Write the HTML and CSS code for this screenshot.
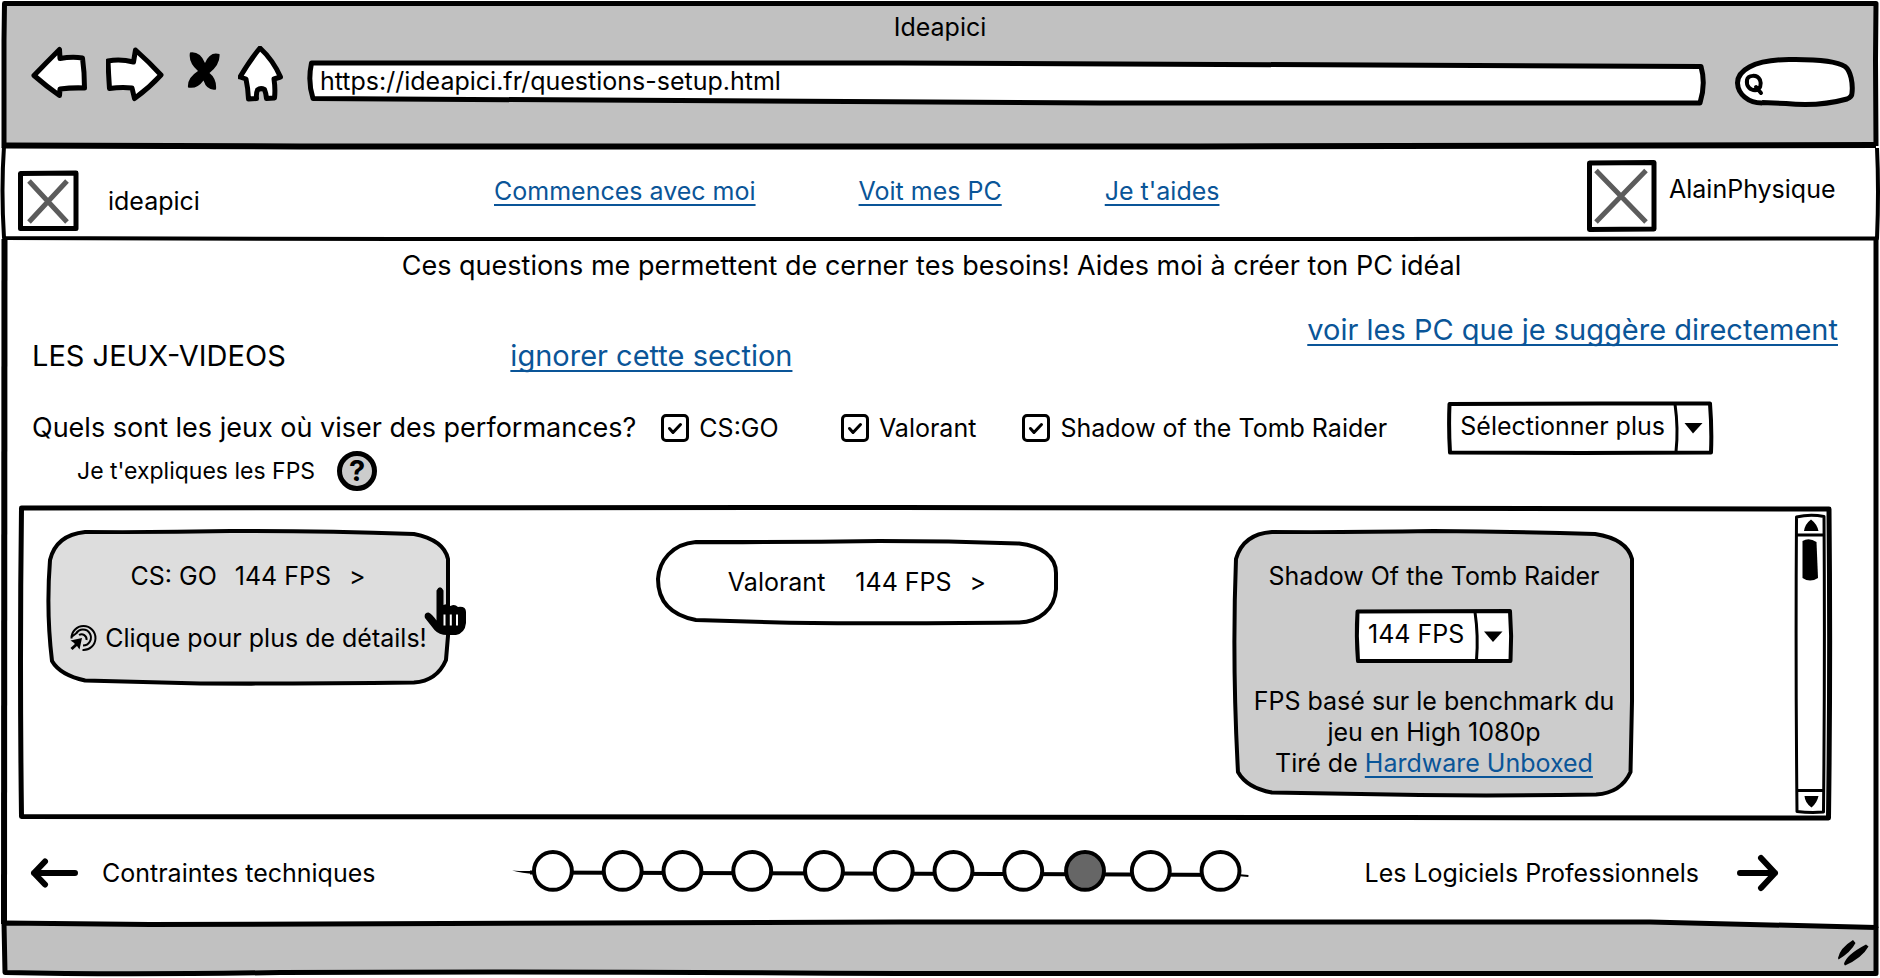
FILE: index.html
```html
<!DOCTYPE html>
<html lang="fr">
<head>
<meta charset="utf-8">
<meta name="viewport" content="width=device-width, initial-scale=1">
<title>Ideapici</title>
<link rel="stylesheet" href="styles.css">
</head>
<body>
<div class="window">

  <header class="chrome">
    <svg class="ink" viewBox="0 0 1880 146" preserveAspectRatio="none" aria-hidden="true">
      <path class="fill-chrome" d="M4 3.5H1876V146H4Z"/>
      <path class="line-5" d="M4 148V40L4.500 3.500H1876L1875.500 60L1876 146"/>
      <path class="line-6" d="M4 145.500L300 146.500H1200L1876 145"/>
    </svg>
    <h1 class="chrome-title">Ideapici</h1>
    <div class="toolbar">
      <button class="tool" type="button" aria-label="Précédent">
        <svg width="58" height="62" viewBox="30 46 58 62"><path class="shape" d="M34 75.500Q46 63 59.500 49.500L60 58.500Q72 56.500 82.500 58Q84.500 72 84.500 88Q72 87.500 60 89L59.500 95.500Q46 86 34 75.500Z"/></svg>
      </button>
      <button class="tool" type="button" aria-label="Suivant">
        <svg width="58" height="62" viewBox="106 46 58 62"><path class="shape" d="M108 61Q120 58.500 133.500 62L135.500 50Q149 62 161 75Q149 88 134.500 98.500L132 88Q121 87 109.500 88.500Q108.500 74 108 61Z"/></svg>
      </button>
      <button class="tool" type="button" aria-label="Arrêter">
        <svg width="38" height="62" viewBox="182 46 38 62"><path d="M190 52.500Q200 51 205 63Q210 51 219.500 54Q220.500 64 209.500 73Q217 79 216 89.500Q207 91 203.500 80.500Q197 89.500 188 87.500Q187 78 198 71Q188 62 190 52.500Z"/></svg>
      </button>
      <button class="tool" type="button" aria-label="Accueil">
        <svg width="46" height="62" viewBox="238 46 46 62"><path class="shape" d="M260 48Q273 60 280.500 77L274 79Q275.500 89 274.500 98L266.500 98.500Q266 93 264.500 89.500Q260.500 87.500 257.500 90Q256 93 256.500 98.500L248.500 99Q248 88 246 79L240 77Q250 60 260 48Z"/></svg>
      </button>
      <form class="address">
        <svg class="ink" viewBox="302 58 1414 48" preserveAspectRatio="none" aria-hidden="true">
          <path class="shape" d="M311.500 63H900L1701 66.500Q1706 84 1700 103H1100Q700 101 313 98.500Q307.500 82 311.500 63Z"/>
        </svg>
        <input class="address-input" type="text" aria-label="Adresse" value="https://ideapici.fr/questions-setup.html">
      </form>
      <label class="search">
        <svg class="ink" viewBox="1734 46 122 62" aria-hidden="true">
          <path class="shape" d="M1762 103C1748 103 1738 94 1737.500 83C1737.500 71 1752 60 1789 59.500C1824 59 1838 62 1845 66.500C1851 71 1853 84 1852 93Q1852 97 1847 99Q1818 107 1786 103.500L1762 102.500"/>
          <path class="loupe" d="M1757 90C1750 91 1746 86 1747 80C1748 75 1757 74 1760 80C1762 85 1760 89 1756 90M1756 87L1761 93"/>
        </svg>
        <input class="search-input" type="search" aria-label="Recherche">
      </label>
    </div>
  </header>

  <nav class="site-nav">
    <svg class="ink" viewBox="0 146 1880 93" preserveAspectRatio="none" aria-hidden="true">
      <path class="line-4" d="M4 146Q1 190 4 238L400 239H1400L1877 238.500Q1879 190 1877 148"/>
    </svg>
    <div class="brand">
      <svg class="placeholder" width="62" height="62" viewBox="0 0 62 62" role="img" aria-label="Logo"><path class="shape" d="M3.500 3.500L59 3V58.500H3.500Z"/><path class="cross" d="M12 11L50 52M50 11L12 52"/></svg>
      <span>ideapici</span>
    </div>
    <div class="links">
      <a href="#">Commences avec moi</a>
      <a href="#">Voit mes PC</a>
      <a href="#">Je t'aides</a>
    </div>
    <div class="user">
      <svg class="placeholder" width="71" height="72" viewBox="0 0 71 72" role="img" aria-label="Avatar"><path class="shape" d="M3.500 3L68 2.500V69L3.500 69.500Z"/><path class="cross" d="M10 10.500L60 62M60 10.500L10 62"/></svg>
      <span>AlainPhysique</span>
    </div>
  </nav>

  <main class="page">
    <svg class="ink" viewBox="0 239 1880 685" preserveAspectRatio="none" aria-hidden="true">
      <path class="line-6" d="M4.500 239Q3 560 4 924"/>
      <path class="line-5" d="M1876 239V928"/>
    </svg>
    <p class="intro">Ces questions me permettent de cerner tes besoins! Aides moi à créer ton PC idéal</p>

    <div class="section-head">
      <h2 class="section-title">LES JEUX-VIDEOS</h2>
      <a class="skip" href="#">ignorer cette section</a>
      <a class="suggest" href="#">voir les PC que je suggère directement</a>
    </div>

    <div class="question-row">
      <div class="question">
        <p class="question-text">Quels sont les jeux où viser des performances?</p>
        <div class="help">
          <span>Je t'expliques les FPS</span>
          <button class="help-button" type="button" aria-label="Aide sur les FPS">?</button>
        </div>
      </div>
      <label class="game"><span class="tick"><input type="checkbox" checked><svg width="28" height="28" viewBox="0 0 28 28" aria-hidden="true"><path d="M8.500 14.500L12 18.500L19.500 10.500"/></svg></span>CS:GO</label>
      <label class="game"><span class="tick"><input type="checkbox" checked><svg width="28" height="28" viewBox="0 0 28 28" aria-hidden="true"><path d="M8.500 14.500L12 18.500L19.500 10.500"/></svg></span>Valorant</label>
      <label class="game"><span class="tick"><input type="checkbox" checked><svg width="28" height="28" viewBox="0 0 28 28" aria-hidden="true"><path d="M8.500 14.500L12 18.500L19.500 10.500"/></svg></span>Shadow of the Tomb Raider</label>
      <div class="picker picker-wide">
        <svg class="ink" viewBox="1445 400 268 54" preserveAspectRatio="none" aria-hidden="true">
          <path class="shape-4" d="M1448.500 403L1600 402.500L1709 402.500Q1711 428 1710 451.500L1580 452L1449 451.500Q1447.500 428 1448.500 403Z"/>
          <path class="line-3" d="M1674 403Q1677.500 428 1675 451"/>
          <path d="M1683.500 422H1701.500L1692 432.500Z"/>
        </svg>
        <select aria-label="Autres jeux"><option>Sélectionner plus</option></select>
      </div>
    </div>

    <section class="panel" aria-label="Performances visées">
      <svg class="ink" viewBox="17 504 1815 316" preserveAspectRatio="none" aria-hidden="true">
        <path class="line-5" d="M21.500 507L900 506.500L1829 508Q1830.500 660 1828.500 817L1400 816.500L21.500 815.500Q19.500 660 21.500 507Z"/>
      </svg>
      <div class="cards">
        <button class="card" type="button">
          <svg class="ink" viewBox="46 529 403 155" preserveAspectRatio="none" aria-hidden="true">
            <path class="shape-4 fill-light" d="M50 559Q56 534 85 531Q160 531.500 230 530Q320 529.500 413 533Q443 539 447 558V635L445 659Q436 680 413 681.500Q300 683 200 682.500L85 679.500Q60 674 52 660Q46 610 50 559Z"/>
          </svg>
          <span class="card-line"><span>CS: GO</span><span>144 FPS</span><span>&gt;</span></span>
          <span class="card-hint">
            <svg width="28" height="28" viewBox="71 624 28 28" aria-hidden="true">
              <path class="line-2" d="M73.500 638.500A12 12 0 1 1 84.500 650M78 633.500A8 8 0 1 1 85 645.500M81 635A5 5 0 0 1 88.500 640M74 636.500L80 632"/>
              <path class="line-3" d="M73.500 649L79 644"/>
              <path d="M72.500 640.500L84 638L81.500 649.500L79 646L75.500 642.500Z"/>
            </svg>
            Clique pour plus de détails!
          </span>
          <svg class="hand" width="42" height="50" viewBox="423 585 42 50" aria-hidden="true">
            <path d="M435.500 589.500Q439 583 442.500 589.500V604Q446 602 449.500 605Q453.500 602.500 457 606Q465 605 465 611V622Q464 632 455 634H446Q438 634 433.500 629L424 617Q422.500 612 427.500 611.500Q431 613 435.500 619.500Z"/>
            <path class="slits" d="M443.500 613.500V624.500M449.800 613.500V624.500M456 613.500V624.500"/>
          </svg>
        </button>

        <button class="card card-slim" type="button">
          <svg class="ink" viewBox="655 539 405 85" preserveAspectRatio="none" aria-hidden="true">
            <path class="shape-4" d="M658 578C659 560 672 543 696 541Q790 541.500 880 540Q950 540 1020 542.500C1042 545 1057 555 1057 572V588C1056 608 1040 621 1020 621.500Q860 623 780 621.500L696 619C670 614 658 600 658 578Z"/>
          </svg>
          <span class="card-line card-line-loose"><span>Valorant</span><span class="value"><span>144 FPS</span><span>&gt;</span></span></span>
        </button>

        <article class="card">
          <svg class="ink" viewBox="1232 529 405 267" preserveAspectRatio="none" aria-hidden="true">
            <path class="shape-4 fill-mid" d="M1236 558Q1243 533 1272 531Q1350 531.500 1434 530Q1520 530.500 1596 533Q1628 538 1633 558V700L1631.500 771Q1622 792 1597 793.500Q1500 795 1420 794L1272 791.500Q1247 787 1238 771Q1232 660 1236 558Z"/>
          </svg>
          <h3 class="card-line">Shadow Of the Tomb Raider</h3>
          <div class="picker picker-narrow">
            <svg class="ink" viewBox="1357 608 160 54" preserveAspectRatio="none" aria-hidden="true">
              <path class="shape-4" d="M1360.500 610.500L1513 610Q1515 635 1513.500 660H1361Q1359 635 1360.500 610.500Z"/>
              <path class="line-3" d="M1478 611Q1481.500 635 1479.500 659"/>
              <path d="M1487 630.500H1505.500L1496 641Z"/>
            </svg>
            <select aria-label="FPS visés"><option>144 FPS</option></select>
          </div>
          <p class="source">FPS basé sur le benchmark du<br>jeu en High 1080p<br>Tiré de <a href="#">Hardware Unboxed</a></p>
        </article>
      </div>
      <svg class="scrollbar" viewBox="1793 512 34 302" preserveAspectRatio="none" aria-hidden="true">
        <path class="line-3" d="M1796.500 516Q1810 513 1824 515.500Q1825 660 1823.500 811Q1810 812 1797 810.500Q1795.500 660 1796.500 516ZM1797 534H1824M1797 789.500H1824"/>
        <path d="M1811 518.500Q1817 523 1818.500 530H1804Q1805 523 1811 518.500ZM1804.500 795H1818.500Q1817 802 1811.500 806.500Q1805 802 1804.500 795Z"/>
        <path d="M1802.500 540Q1809 536 1816.500 541L1818 577Q1810 582 1802.500 577Z"/>
      </svg>
    </section>

    <div class="steps">
      <a class="step-link" href="#">
        <svg width="48" height="36" viewBox="30 854 48 36" aria-hidden="true"><path class="arrow" d="M75 872H34M45 860.500L34 872L45 883.500"/></svg>
        Contraintes techniques
      </a>
      <svg class="progress" viewBox="512 847 739 48" role="img" aria-label="Étape 9 sur 11">
        <path d="M512 868.500Q522 869.500 535 869V872Q522 871.500 512 868.500Z"/>
        <path class="line-4" d="M530 870.500L1000 872L1240 873"/>
        <path class="line-2" d="M1240 873L1251 874"/>
        <g class="dots">
          <circle cx="553" cy="869" r="19"/><circle cx="623" cy="869" r="19"/><circle cx="683" cy="869" r="19"/><circle cx="753" cy="869" r="19"/><circle cx="825" cy="869" r="19"/><circle cx="895" cy="869" r="19"/><circle cx="955" cy="869" r="19"/><circle cx="1025" cy="869" r="19"/><circle class="current" cx="1087" cy="869" r="19"/><circle cx="1153" cy="869" r="19"/><circle cx="1223" cy="869" r="19"/>
        </g>
      </svg>
      <a class="step-link step-next" href="#">
        Les Logiciels Professionnels
        <svg width="42" height="38" viewBox="1737 853 42 38" aria-hidden="true"><path class="arrow" d="M1740 872H1775M1761 857L1775 872L1761 887"/></svg>
      </a>
    </div>
  </main>

  <footer class="status">
    <svg class="ink" viewBox="0 924 1880 54" preserveAspectRatio="none" aria-hidden="true">
      <path class="fill-chrome" d="M4 923L1600 922L1876 927V973H4Z"/>
      <path class="line-5" d="M4 923L150 924.500L900 922H1650L1876 927.500V973.500H900Q550 971 280 972.500Q120 975 5 972.500L4 923"/>
    </svg>
    <svg class="grip" width="32" height="28" viewBox="1837 939 32 28" aria-hidden="true">
      <path d="M1838 958Q1840 948 1853 940L1855.500 943Q1851 952 1838.500 959.500ZM1844 964Q1846 955 1866 944.500L1868.500 946.500Q1862 958 1845 965.500Z"/>
    </svg>
  </footer>
</div>
</body>
</html>
```
FILE: styles.css
```css
:root {
  --ink: #000;
  --chrome: #c1c1c1;
  --link: #0a5598;
  --text: 25px;
  --text-question: 27px;
  --text-large: 29px;
  --text-small: 23px;
}

* { box-sizing: border-box; }

body {
  margin: 0;
  background: #fff;
  color: var(--ink);
  font: 400 var(--text)/30px Inter, "Liberation Sans", sans-serif;
}

h1, h2, h3, p { margin: 0; font: inherit; }

button, input, select {
  margin: 0;
  padding: 0;
  border: 0;
  background: none;
  color: inherit;
  font: inherit;
  appearance: none;
  outline: 0;
}

button { cursor: pointer; }

a {
  color: var(--link);
  text-decoration: underline 2px;
  text-underline-offset: 4px;
  text-decoration-skip-ink: none;
}

svg { display: block; flex: none; }

/* Hand-drawn outlines, stretched behind the box that holds them */
.ink {
  position: absolute;
  inset: 0;
  z-index: -1;
  width: 100%;
  height: 100%;
  overflow: visible;
  pointer-events: none;
}

.ink path, .scrollbar path { vector-effect: non-scaling-stroke; }

.chrome, .site-nav, .page, .status, .address, .search, .panel, .card, .picker {
  position: relative;
  isolation: isolate;
}

.shape, .shape-4 { fill: #fff; stroke: var(--ink); stroke-width: 5; stroke-linejoin: round; }
.shape-4 { stroke-width: 4; }
.line-2, .line-3, .line-4, .line-5, .line-6 { fill: none; stroke: var(--ink); stroke-linejoin: round; }
.line-2 { stroke-width: 2; }
.line-3 { stroke-width: 3; }
.line-4 { stroke-width: 4; }
.line-5 { stroke-width: 5; }
.line-6 { stroke-width: 6; }
.fill-chrome { fill: var(--chrome); }
.fill-light { fill: #ddd; }
.fill-mid { fill: #ccc; }

.window { display: flex; flex-direction: column; min-height: 100vh; }

/* Browser bar */
.chrome { padding: 12px 0 38px; }
.chrome-title { text-align: center; }
.toolbar { display: flex; gap: 18px; margin-top: 4px; padding: 0 24px 0 30px; }
.address { flex: 1; align-self: flex-end; margin-bottom: 2px; }
.address-input { width: 100%; height: 48px; padding: 0 18px 2px; }
.search { width: 122px; }
.search-input { width: 100%; height: 62px; padding: 0 16px 0 32px; }
.loupe { fill: none; stroke: var(--ink); stroke-width: 4; stroke-linecap: round; }

/* Site navigation */
.site-nav {
  display: grid;
  grid-template-columns: 494fr 1092fr 294fr;
  padding: 14px 0 7px;
}
.brand { display: flex; align-items: center; align-self: end; gap: 29px; padding-left: 17px; line-height: 28px; }
.links { display: flex; gap: 103px; line-height: 62px; }
.user { display: flex; gap: 12px; line-height: 58px; }
.cross { fill: none; stroke: #5c5c5c; stroke-width: 5; }

/* Page */
.page { display: flex; flex: 1; flex-direction: column; padding: 12px 34px 0 17px; }
.intro { font-size: var(--text-question); text-align: center; }

.section-head {
  display: grid;
  grid-template-columns: 479fr 798fr auto;
  height: 62px;
  margin-top: 31px;
  padding: 0 8px 0 15px;
  font-size: var(--text-large);
  line-height: 36px;
}
.section-title, .skip { align-self: end; justify-self: start; }

.question-row {
  display: grid;
  grid-template-columns: 631fr 180fr 182fr 425fr auto 124fr;
  margin-top: 27px;
  padding: 0 8px 0 15px;
}
.question { padding-top: 8px; }
.question-text { font-size: var(--text-question); line-height: 38px; white-space: nowrap; }
.help { display: flex; align-items: center; gap: 22px; margin-top: 4px; padding-left: 45px; font-size: var(--text-small); }
.help-button {
  width: 40px;
  height: 40px;
  border: 5px solid var(--ink);
  border-radius: 50%;
  background: #ccc;
  font-size: var(--text-large);
  font-weight: 700;
  line-height: 30px;
}

.game { display: flex; align-items: center; gap: 10px; height: 54px; white-space: nowrap; }
.tick { display: grid; }
.tick input { grid-area: 1 / 1; width: 28px; height: 28px; border: 3px solid var(--ink); border-radius: 5px; }
.tick svg { grid-area: 1 / 1; visibility: hidden; pointer-events: none; }
.tick input:checked + svg { visibility: visible; }
.tick path { fill: none; stroke: var(--ink); stroke-width: 3; stroke-linecap: round; stroke-linejoin: round; }

.picker-wide { width: 268px; height: 54px; }
.picker-narrow { width: 160px; height: 54px; }
.picker select { width: 100%; height: 100%; padding: 0 40px 5px 14px; }

/* Cards */
.panel { display: flex; margin: 14px 14px 0 0; }
.cards {
  display: grid;
  flex: 1;
  grid-template-columns: 609fr 577fr 561fr;
  align-items: start;
  padding: 25px 0 24px 29px;
}
.card {
  display: flex;
  flex-direction: column;
  align-items: center;
  width: 404px;
  padding: 31px 4px 18px;
}
button.card { gap: 32px; padding-bottom: 32px; }
button.card-slim { margin-top: 10px; padding: 27px 4px 28px; }
.card-line, .value { display: flex; gap: 18px; }
.card-line-loose { gap: 30px; }
.card-hint { display: flex; align-items: center; gap: 8px; white-space: nowrap; }
.hand { position: absolute; top: 56px; right: -16px; }
.slits { stroke: #fff; stroke-width: 2; }
.card .picker { margin: 18px 0 23px; }
.source { line-height: 31px; text-align: center; }
.scrollbar { width: 34px; height: auto; margin: 8px 5px 6px 0; }

/* Step navigation */
.steps {
  display: grid;
  flex: 1;
  grid-template-columns: 484fr 739fr 116fr auto;
  align-items: center;
  min-height: 101px;
  padding: 0 67px 0 13px;
}
.step-link { display: flex; align-items: center; gap: 24px; color: inherit; text-decoration: none; }
.step-next { grid-column: 4; gap: 38px; }
.arrow { fill: none; stroke: var(--ink); stroke-width: 6; stroke-linecap: round; stroke-linejoin: round; }
.progress { width: 100%; height: auto; overflow: visible; }
.dots { fill: #fff; stroke: var(--ink); stroke-width: 4; }
.dots .current { fill: #666; }

/* Status bar */
.status { display: flex; justify-content: flex-end; padding: 15px 11px 11px; }
```
